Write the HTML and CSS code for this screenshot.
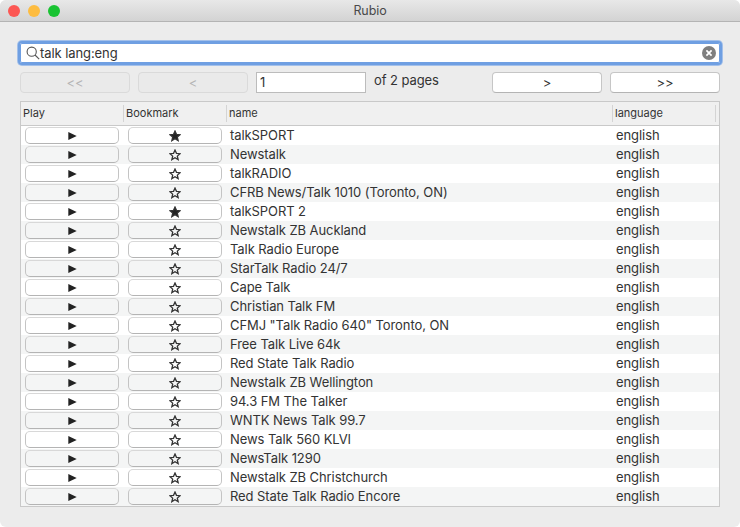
FILE: index.html
```html
<!DOCTYPE html>
<html lang="en">
<head>
    <meta charset="UTF-8">
    <title>Rubio</title>
    <link rel="stylesheet" href="styles.css">
</head>
<body>
    <div class="window">
        <div class="titlebar">
            <div class="lights">
                <span class="light red"></span>
                <span class="light yellow"></span>
                <span class="light green"></span>
            </div>
            <span class="title">Rubio</span>
        </div>
        <div class="content">
            <div class="search">
                <svg class="search-icon" width="14" height="14" viewBox="0 0 14 14"><circle cx="5.7" cy="5.7" r="4.6"/><path d="M9 9l4.2 4.2"/></svg>
                <span class="search-text">talk lang:eng</span>
                <svg class="search-clear" width="14" height="14" viewBox="0 0 14 14"><circle cx="7" cy="7" r="7"/><path d="M4.4 4.4l5.2 5.2M9.6 4.4l-5.2 5.2"/></svg>
            </div>
            <div class="pager">
                <button class="btn" disabled>&lt;&lt;</button>
                <button class="btn" disabled>&lt;</button>
                <div class="page-input">1</div>
                <span class="page-count">of 2 pages</span>
                <button class="btn next">&gt;</button>
                <button class="btn">&gt;&gt;</button>
            </div>
            <div class="table">
                <div class="row head">
                    <div class="th c-play">Play</div>
                    <div class="th c-mark">Bookmark</div>
                    <div class="th c-name">name</div>
                    <div class="th c-lang">language</div>
                </div>
                <div id="rows"></div>
            </div>
        </div>
    </div>
    <script>
        var stations = [
            ['talkSPORT', 1], ['Newstalk', 0], ['talkRADIO', 0],
            ['CFRB News/Talk 1010 (Toronto, ON)', 0], ['talkSPORT 2', 1],
            ['Newstalk ZB Auckland', 0], ['Talk Radio Europe', 0],
            ['StarTalk Radio 24/7', 0], ['Cape Talk', 0], ['Christian Talk FM', 0],
            ['CFMJ "Talk Radio 640" Toronto, ON', 0], ['Free Talk Live 64k', 0],
            ['Red State Talk Radio', 0], ['Newstalk ZB Wellington', 0],
            ['94.3 FM The Talker', 0], ['WNTK News Talk 99.7', 0],
            ['News Talk 560 KLVI', 0], ['NewsTalk 1290', 0],
            ['Newstalk ZB Christchurch', 0], ['Red State Talk Radio Encore', 0]
        ];
        var play = '<svg width="9" height="8" viewBox="0 0 9 8"><path d="M0.300 0L8.700 4L0.300 8z"/></svg>';
        var star = '<svg class="star" width="12" height="12" viewBox="0 0 14 14"><path d="M7 1.200l1.700 3.900 4.200.4-3.200 2.800 1 4.100L7 10.200l-3.700 2.200 1-4.100L1.100 5.500l4.200-.4z"/></svg>';
        var html = '';
        stations.forEach(function(s) {
            html += '<div class="row">' +
                '<div class="c-play"><button class="cell-btn">' + play + '</button></div>' +
                '<div class="c-mark"><button class="cell-btn' + (s[1] ? ' on' : '') + '">' + star + '</button></div>' +
                '<div class="c-name">' + s[0].replace(/"/g, '&quot;') + '</div>' +
                '<div class="c-lang">english</div>' +
                '</div>';
        });
        document.getElementById('rows').innerHTML = html;
    </script>
</body>
</html>
```

FILE: styles.css
```css
html, body {
    margin: 0;
    padding: 0;
    background-color: #fff;
}
body {
    font-family: Inter, "Liberation Sans", sans-serif;
    font-size: 13px;
    letter-spacing: -0.08px;
    color: #333;
}
.window {
    width: 740px;
    height: 527px;
    background-color: #ececec;
    border-radius: 6px;
    overflow: hidden;
}
.titlebar {
    height: 21px;
    border-bottom: 1px solid #b4b4b4;
    background: linear-gradient(#e8e8e8, #d3d3d3);
    display: flex;
    align-items: center;
    justify-content: center;
    position: relative;
}
.title {
    font-size: 12.5px;
    color: #4a4a4a;
}
.lights {
    position: absolute;
    left: 8px;
    top: 5px;
    display: flex;
    gap: 8px;
}
.light {
    width: 12px;
    height: 12px;
    border-radius: 50%;
}
.red { background-color: #fc5753; }
.yellow { background-color: #fdbc40; }
.green { background-color: #19c332; }
.content {
    padding: 21px 20px 0;
}
.search {
    height: 20px;
    margin-bottom: 9px;
    background-color: #fff;
    box-shadow: inset 0 0 0 1px #6f9fe2, 0 0 0 2px #6f9fe2, 0 0 0 3px #a3c0ea;
    border-radius: 2px;
    display: flex;
    align-items: center;
    padding: 0 4px 0 6px;
}
.search-icon {
    fill: none;
    stroke: #555;
    stroke-width: 1.1;
}
.search-text {
    flex: 1;
}
.search-clear circle {
    fill: #7f7f7f;
}
.search-clear path {
    stroke: #fff;
    stroke-width: 1.7;
}
.pager {
    display: flex;
    gap: 8px;
    align-items: flex-start;
    margin-bottom: 8px;
}
.btn {
    width: 110px;
    height: 21px;
    padding: 0;
    background-color: #fff;
    border: 1px solid #c6c6c6;
    border-bottom-color: #b4b4b4;
    border-radius: 4px;
    font-family: inherit;
    font-size: 13px;
    color: #333;
}
.btn:disabled {
    background-color: #eaeaea;
    border-color: #dadada;
    color: #b5b5b5;
}
.page-input {
    width: 105px;
    height: 19px;
    line-height: 19px;
    padding-left: 3px;
    background-color: #fff;
    border: 1px solid #bcbcbc;
}
.page-count {
    width: 110px;
    line-height: 17px;
}
.table {
    width: 698px;
    height: 404px;
    border: 1px solid #c9c9c9;
    background-color: #fff;
}
.row {
    display: flex;
    height: 19px;
    line-height: 19px;
    align-items: center;
}
.row:nth-child(even) {
    background-color: #f4f5f5;
}
.row.head {
    height: 23px;
    background-color: #f0f0f0;
    border-bottom: 1px solid #c9c9c9;
    font-size: 11px;
    letter-spacing: 0;
    line-height: 16px;
}
.th {
    height: 17px;
    border-right: 1px solid #d4d4d4;
    padding-left: 2px;
    box-sizing: border-box;
}
.c-play, .c-mark {
    width: 103px;
    padding-left: 4px;
    box-sizing: border-box;
}
.c-name {
    width: 386px;
    padding-left: 3px;
    box-sizing: border-box;
}
.c-lang {
    width: 103px;
    padding-left: 3px;
    box-sizing: border-box;
}
.th.c-play, .th.c-mark, .th.c-name, .th.c-lang {
    padding-left: 2px;
}
.cell-btn {
    width: 94px;
    height: 17px;
    padding: 0;
    background-color: transparent;
    border: 1px solid #c4c4c4;
    border-top-color: #d8d8d8;
    border-bottom-color: #b4b4b4;
    border-radius: 5px;
    display: flex;
    align-items: center;
    justify-content: center;
}
.cell-btn svg {
    fill: #222;
}
.cell-btn .star {
    fill: none;
    stroke: #333;
    stroke-width: 1.5;
}
.cell-btn.on .star {
    fill: #222;
}
```
